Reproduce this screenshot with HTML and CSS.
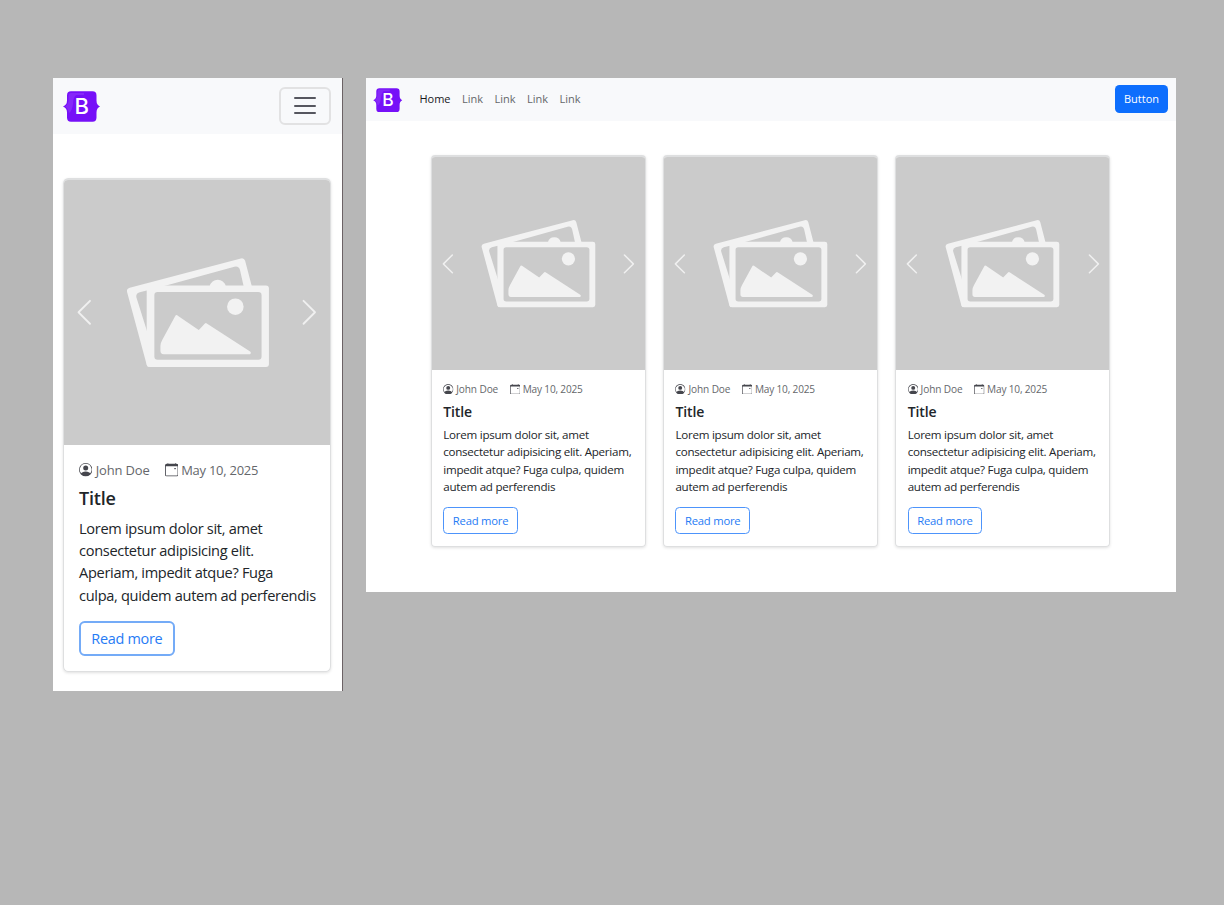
FILE: index.html
```
<!DOCTYPE html>
<html lang="en">
<head>
<meta charset="utf-8">
<title>Cards</title>
<link rel="stylesheet" href="styles.css">
</head>
<body>
<svg class="defs" width="0" height="0">
  <symbol id="logo" viewBox="0 0 37 31">
    <path fill="#7610f8" d="M8 .3h21.500q4 0 4 4.200v5q0 4.500 3.500 6q-3.500 1.500-3.500 6v5q0 4.200-4 4.200H8q-4 0-4-4.200v-5q0-4.500-4-6q4-1.500 4-6v-5Q4 .3 8 .3z"/>
    <path fill="#8f38fa" opacity=".6" d="M8 2h13v2h-8q-3 3-3 9-1 7-4 9-1-5-4-6.500Q5.500 13 5.500 9V5Q5.500 2 8 2z"/>
  </symbol>
  <symbol id="photos" viewBox="0 0 267 265">
    <g fill="#f2f2f2" stroke="#f2f2f2" stroke-linejoin="round">
      <path fill-rule="evenodd" stroke="none" d="M65 107.600 176.500 78.200Q179.800 77.400 180.800 80.600L187.700 107H176.500 179.500L175.700 90Q174.500 85.300 170 86.500L96 107H84V156.700L71.700 117.500Q70.700 113.500 75 112.200L84 109.800V187.300Q82.700 187 82 185L62.300 112Q61.500 108.600 65 107.600z"/>
      <path stroke="none" d="M85 105.300H201.700Q204.700 105.300 204.700 108.300V184.300Q204.700 187.300 201.700 187.300H85Q82 187.300 82 184.300V108.300Q82 105.300 85 105.300zM93 112Q89.700 112 89.700 115.300V176.700Q89.700 180 93 180H194Q197.300 180 197.300 176.700V115.300Q197.300 112 194 112z" fill-rule="evenodd"/>
      <path stroke="none" d="M145.300 106a8.200 8.200 0 0 1 16 0z"/>
      <circle cx="171" cy="126.700" r="8.300" stroke="none"/>
      <path stroke-width="3" d="M112 136.700 134.500 152 141.500 144.700 185 173H99Q97.300 173 97.300 171V166Q97.300 163.500 99 160.500z"/>
    </g>
  </symbol>
  <symbol id="prev" viewBox="0 0 16 16"><path d="M11.354 1.646a.5.5 0 0 1 0 .708L5.707 8l5.647 5.646a.5.5 0 0 1-.708.708l-6-6a.5.5 0 0 1 0-.708l6-6a.5.5 0 0 1 .708 0"/></symbol>
  <symbol id="next" viewBox="0 0 16 16"><path d="M4.646 1.646a.5.5 0 0 1 .708 0l6 6a.5.5 0 0 1 0 .708l-6 6a.5.5 0 0 1-.708-.708L10.293 8 4.646 2.354a.5.5 0 0 1 0-.708"/></symbol>
  <symbol id="person" viewBox="0 0 16 16"><path d="M11 6a3 3 0 1 1-6 0 3 3 0 0 1 6 0"/><path fill-rule="evenodd" d="M0 8a8 8 0 1 1 16 0A8 8 0 0 1 0 8m8-7a7 7 0 0 0-5.468 11.370C3.242 11.226 4.805 10 8 10s4.757 1.225 5.468 2.370A7 7 0 0 0 8 1"/></symbol>
  <symbol id="calendar" viewBox="0 0 16 16"><path d="M11 6.500a.5.5 0 0 1 .5-.5h1a.5.5 0 0 1 .5.5v.5a.5.5 0 0 1-.5.5h-1a.5.5 0 0 1-.5-.5z"/><path d="M3.500 0a.5.5 0 0 1 .5.5V1h8V.5a.5.5 0 0 1 1 0V1h1a2 2 0 0 1 2 2v11a2 2 0 0 1-2 2H2a2 2 0 0 1-2-2V3a2 2 0 0 1 2-2h1V.5a.5.5 0 0 1 .5-.5M1 4v10a1 1 0 0 0 1 1h12a1 1 0 0 0 1-1V4z"/></symbol>
</svg>
<main class="board">
  <section class="page mobile">
    <header class="bar">
      <svg class="logo" viewBox="0 0 37 31"><use href="#logo"/><text x="18.700" y="23.300" text-anchor="middle" class="logo-letter">B</text></svg>
      <div class="toggler"><i></i><i></i><i></i></div>
    </header>
    <div class="cards">
      <article class="card">
        <div class="media"><svg class="chev"><use href="#prev"/></svg><svg class="photos"><use href="#photos"/></svg><svg class="chev"><use href="#next"/></svg></div>
        <div class="body">
          <div class="meta"><svg><use href="#person"/></svg><span class="who">John Doe</span><svg><use href="#calendar"/></svg><span class="when">May 10, 2025</span></div>
          <h2 class="title">Title</h2>
          <p class="text">Lorem ipsum dolor sit, amet<br>consectetur adipisicing elit.<br>Aperiam, impedit atque? Fuga<br>culpa, quidem autem ad perferendis</p>
          <a class="more"><span>Read more</span></a>
        </div>
      </article>
    </div>
  </section>
  <section class="page desktop">
    <header class="bar">
      <svg class="logo" viewBox="0 0 37 31"><use href="#logo"/><text x="18.700" y="23.300" text-anchor="middle" class="logo-letter">B</text></svg>
      <nav class="nav"><a class="active">Home</a><a>Link</a><a>Link</a><a>Link</a><a>Link</a></nav>
      <a class="cta">Button</a>
    </header>
    <div class="cards">
      <article class="card">
        <div class="media"><svg class="chev"><use href="#prev"/></svg><svg class="photos"><use href="#photos"/></svg><svg class="chev"><use href="#next"/></svg></div>
        <div class="body">
          <div class="meta"><svg><use href="#person"/></svg><span class="who">John Doe</span><svg><use href="#calendar"/></svg><span class="when">May 10, 2025</span></div>
          <h2 class="title">Title</h2>
          <p class="text">Lorem ipsum dolor sit, amet<br>consectetur adipisicing elit. Aperiam,<br>impedit atque? Fuga culpa, quidem<br>autem ad perferendis</p>
          <a class="more"><span>Read more</span></a>
        </div>
      </article>
      <article class="card">
        <div class="media"><svg class="chev"><use href="#prev"/></svg><svg class="photos"><use href="#photos"/></svg><svg class="chev"><use href="#next"/></svg></div>
        <div class="body">
          <div class="meta"><svg><use href="#person"/></svg><span class="who">John Doe</span><svg><use href="#calendar"/></svg><span class="when">May 10, 2025</span></div>
          <h2 class="title">Title</h2>
          <p class="text">Lorem ipsum dolor sit, amet<br>consectetur adipisicing elit. Aperiam,<br>impedit atque? Fuga culpa, quidem<br>autem ad perferendis</p>
          <a class="more"><span>Read more</span></a>
        </div>
      </article>
      <article class="card">
        <div class="media"><svg class="chev"><use href="#prev"/></svg><svg class="photos"><use href="#photos"/></svg><svg class="chev"><use href="#next"/></svg></div>
        <div class="body">
          <div class="meta"><svg><use href="#person"/></svg><span class="who">John Doe</span><svg><use href="#calendar"/></svg><span class="when">May 10, 2025</span></div>
          <h2 class="title">Title</h2>
          <p class="text">Lorem ipsum dolor sit, amet<br>consectetur adipisicing elit. Aperiam,<br>impedit atque? Fuga culpa, quidem<br>autem ad perferendis</p>
          <a class="more"><span>Read more</span></a>
        </div>
      </article>
    </div>
  </section>
</main>
</body>
</html>
```
FILE: styles.css
```
* { box-sizing: border-box; }
body { margin: 0; background: #b7b7b7; font-family: "Open Sans", "Noto Sans", sans-serif; color: #212529; }
.defs { display: block; }
.board { display: flex; align-items: flex-start; height: 905px; padding: 78px 48px 0 53px; gap: 23px; overflow: hidden; }
.page { background: #fff; flex: none; }
.mobile { width: 290px; height: 613px; border-right: 1px solid #6b6265; font-size: 14.900px; }
.desktop { width: 810px; height: 514px; font-size: 11.600px; }
.bar { display: flex; align-items: center; background: #f8f9fb; }
.logo-letter { font: 500 22px Inter, sans-serif; fill: #fff; }

.mobile .bar { height: 56px; padding: 0 11px 0 10px; justify-content: space-between; }
.mobile .logo { width: 37px; height: 31px; margin-top: 1px; }
.toggler { width: 52px; height: 38px; margin-bottom: 1px; border: 2px solid #e2e2e3; border-radius: 6px; display: flex; flex-direction: column; align-items: center; justify-content: center; gap: 5.500px; }
.toggler i { width: 22px; height: 2px; background: #56565f; border-radius: 1px; }

.desktop .bar { height: 43px; padding: 0 8px 0 7px; }
.desktop .logo { width: 29.500px; height: 24.500px; margin-top: 1px; }
.nav { display: flex; gap: 11.500px; margin: -2px 0 0 17px; font-size: 11px; color: #65676a; }
.nav a { letter-spacing: -.02px; }
.nav .active { color: #17171b; }
.cta { margin: -1px 0 0 auto; width: 53px; height: 28px; line-height: 28px; text-align: center; background: #0d6efd; color: #fff; border-radius: 4.500px; font-size: 11px; }

.cards { display: flex; }
.mobile .cards { padding: 44px 0 0 10px; }
.desktop .cards { padding: 34px 0 0 65px; gap: 17.200px; }
.card { border: 1px solid #dedfe0; border-radius: .35em; box-shadow: 0 1px 3px rgba(0,0,0,.12); overflow: hidden; flex: none; }
.mobile .card { width: 268px; height: 493.500px; border-top-width: 2px; }
.desktop .card { width: 215px; height: 392px; border-top-width: 2px; }
.media { background: #cbcbcb; display: flex; align-items: center; justify-content: space-between; position: relative; }
.mobile .media { height: 265px; padding: 0 5px; }
.desktop .media { height: 213px; padding: 0 4px; }
.photos { position: absolute; inset: 0; width: 100%; height: 100%; }
.mobile .photos { left: .7px; }
.chev { width: 2.050em; height: 2.050em; fill: #f0f0f0; }
.body { padding: .98em .97em; }
.mobile .body { padding: 15px; }
.meta { display: flex; align-items: center; height: 1.350em; color: #65676b; white-space: nowrap; }
.meta svg { width: .9em; height: .9em; fill: #45464d; flex: none; }
.meta span { font-size: .87em; margin-left: .25em; letter-spacing: -.01em; }
.meta .who { margin-right: 1.150em; }
.meta .when { letter-spacing: -.018em; }
.title { margin: 0; font-weight: 600; }
.mobile .title { font-size: 18px; line-height: 22.300px; margin-top: 7.300px; letter-spacing: -.2px; }
.desktop .title { font-size: 14px; line-height: 17.400px; margin-top: 5.900px; letter-spacing: -.1px; }
.text { white-space: nowrap; }
.mobile .text { font-size: 14.600px; line-height: 22.300px; letter-spacing: -.32px; margin: 7px 0 15px; }
.desktop .text { line-height: 17.400px; letter-spacing: -.26px; margin: 5.400px 0 11.600px; }
.more { display: flex; align-items: center; justify-content: center; width: 6.430em; height: 2.370em; border: 1px solid #4d94fb; border-radius: .38em; color: #267bf5; }
.more span { font-size: .97em; letter-spacing: -.02em; }
.mobile .more { border: 2px solid #74abf7; }
```
